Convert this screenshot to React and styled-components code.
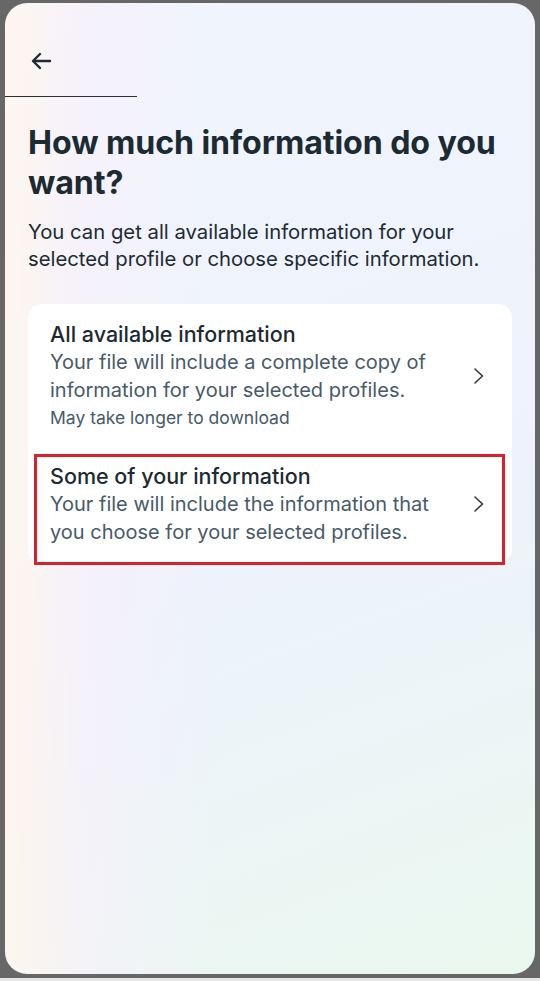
import React from 'react';
import styled, { createGlobalStyle } from 'styled-components';

const GlobalStyle = createGlobalStyle`
  html, body {
    margin: 0;
    padding: 0;
    background: #676767;
  }
  body {
    font-family: Inter, "Noto Sans", sans-serif;
    -webkit-font-smoothing: antialiased;
  }
`;

const Frame = styled.div`
  width: 540px;
  height: 981px;
  box-sizing: border-box;
  padding: 3px 5px 4px 5px;
  background: #676767;
  border-bottom: 3px solid #e6e6e6;
  display: flex;
`;

const Panel = styled.div`
  flex: 1;
  border-radius: 22px;
  overflow: hidden;
  background:
    linear-gradient(90deg, rgba(255, 246, 238, 0.9) 0%, rgba(248, 240, 250, 0.6) 16%, rgba(240, 244, 255, 0) 40%),
    linear-gradient(160deg, #f1f5fd 0%, #edf2fc 55%, #eaf8ef 100%);
  display: flex;
  flex-direction: column;
`;

const TopBar = styled.div`
  height: 94px;
  width: 132px;
  box-sizing: border-box;
  display: flex;
  align-items: center;
  padding-left: 24px;
  border-bottom: 1px solid #2a2f33;
`;

const BackButton = styled.button`
  border: none;
  background: none;
  padding: 0;
  margin-top: 22px;
  display: flex;
  cursor: pointer;
  color: #1c2b33;
`;

const Content = styled.div`
  padding: 26px 23px 0 23px;
`;

const Title = styled.h1`
  margin: 0;
  font-size: 32.2px;
  line-height: 40px;
  font-weight: 700;
  color: #1c2b33;
  letter-spacing: -0.1px;
`;

const Lead = styled.p`
  margin: 15px 0 0 0;
  padding-right: 12px;
  font-size: 20.3px;
  line-height: 27px;
  color: #1c2b33;
`;

const Card = styled.div`
  margin-top: 32px;
  background: #ffffff;
  border-radius: 14px;
  padding: 16px 7px 0 6px;
  height: 259px;
  box-sizing: border-box;
`;

const Option = styled.div`
  display: flex;
  align-items: center;
  justify-content: space-between;
  padding: ${p => (p.$highlight ? '5px 17px 16px 13px' : '0 20px 14px 16px')};
  border: ${p => (p.$highlight ? '3px solid #dc1f2b' : 'none')};
  margin-top: ${p => (p.$highlight ? '8px' : '0')};
  cursor: pointer;
`;

const OptionText = styled.div`
  display: flex;
  flex-direction: column;
`;

const OptionTitle = styled.div`
  font-size: 21.5px;
  line-height: 28px;
  font-weight: 500;
  color: #1c2b33;
`;

const OptionDesc = styled.div`
  font-size: 20px;
  line-height: 28px;
  color: #465a69;
`;

const OptionNote = styled.div`
  font-size: 17.5px;
  line-height: 28px;
  color: #465a69;
`;

const Chevron = styled.svg`
  flex-shrink: 0;
  margin-left: 16px;
`;

const ArrowLeft = () => (
  <svg width="24" height="24" viewBox="0 0 24 24" fill="none">
    <path d="M21 12H4.5M11 5l-7 7 7 7" stroke="currentColor" strokeWidth="2.4" strokeLinecap="round" strokeLinejoin="round" />
  </svg>
);

const ChevronRight = () => (
  <Chevron width="12" height="18" viewBox="0 0 12 18" fill="none">
    <path d="M2 2l7.5 7L2 16" stroke="#2c3a42" strokeWidth="1.6" strokeLinecap="round" strokeLinejoin="round" />
  </Chevron>
);

const options = [
  {
    title: 'All available information',
    desc: 'Your file will include a complete copy of information for your selected profiles.',
    note: 'May take longer to download',
  },
  {
    title: 'Some of your information',
    desc: 'Your file will include the information that you choose for your selected profiles.',
    highlight: true,
  },
];

const App = () => (
  <>
    <GlobalStyle />
    <Frame>
      <Panel>
        <TopBar>
          <BackButton aria-label="Back">
            <ArrowLeft />
          </BackButton>
        </TopBar>
        <Content>
          <Title>How much information do you want?</Title>
          <Lead>You can get all available information for your selected profile or choose specific information.</Lead>
          <Card>
            {options.map(o => (
              <Option key={o.title} $highlight={o.highlight}>
                <OptionText>
                  <OptionTitle>{o.title}</OptionTitle>
                  <OptionDesc>{o.desc}</OptionDesc>
                  {o.note && <OptionNote>{o.note}</OptionNote>}
                </OptionText>
                <ChevronRight />
              </Option>
            ))}
          </Card>
        </Content>
      </Panel>
    </Frame>
  </>
);

export default App;
